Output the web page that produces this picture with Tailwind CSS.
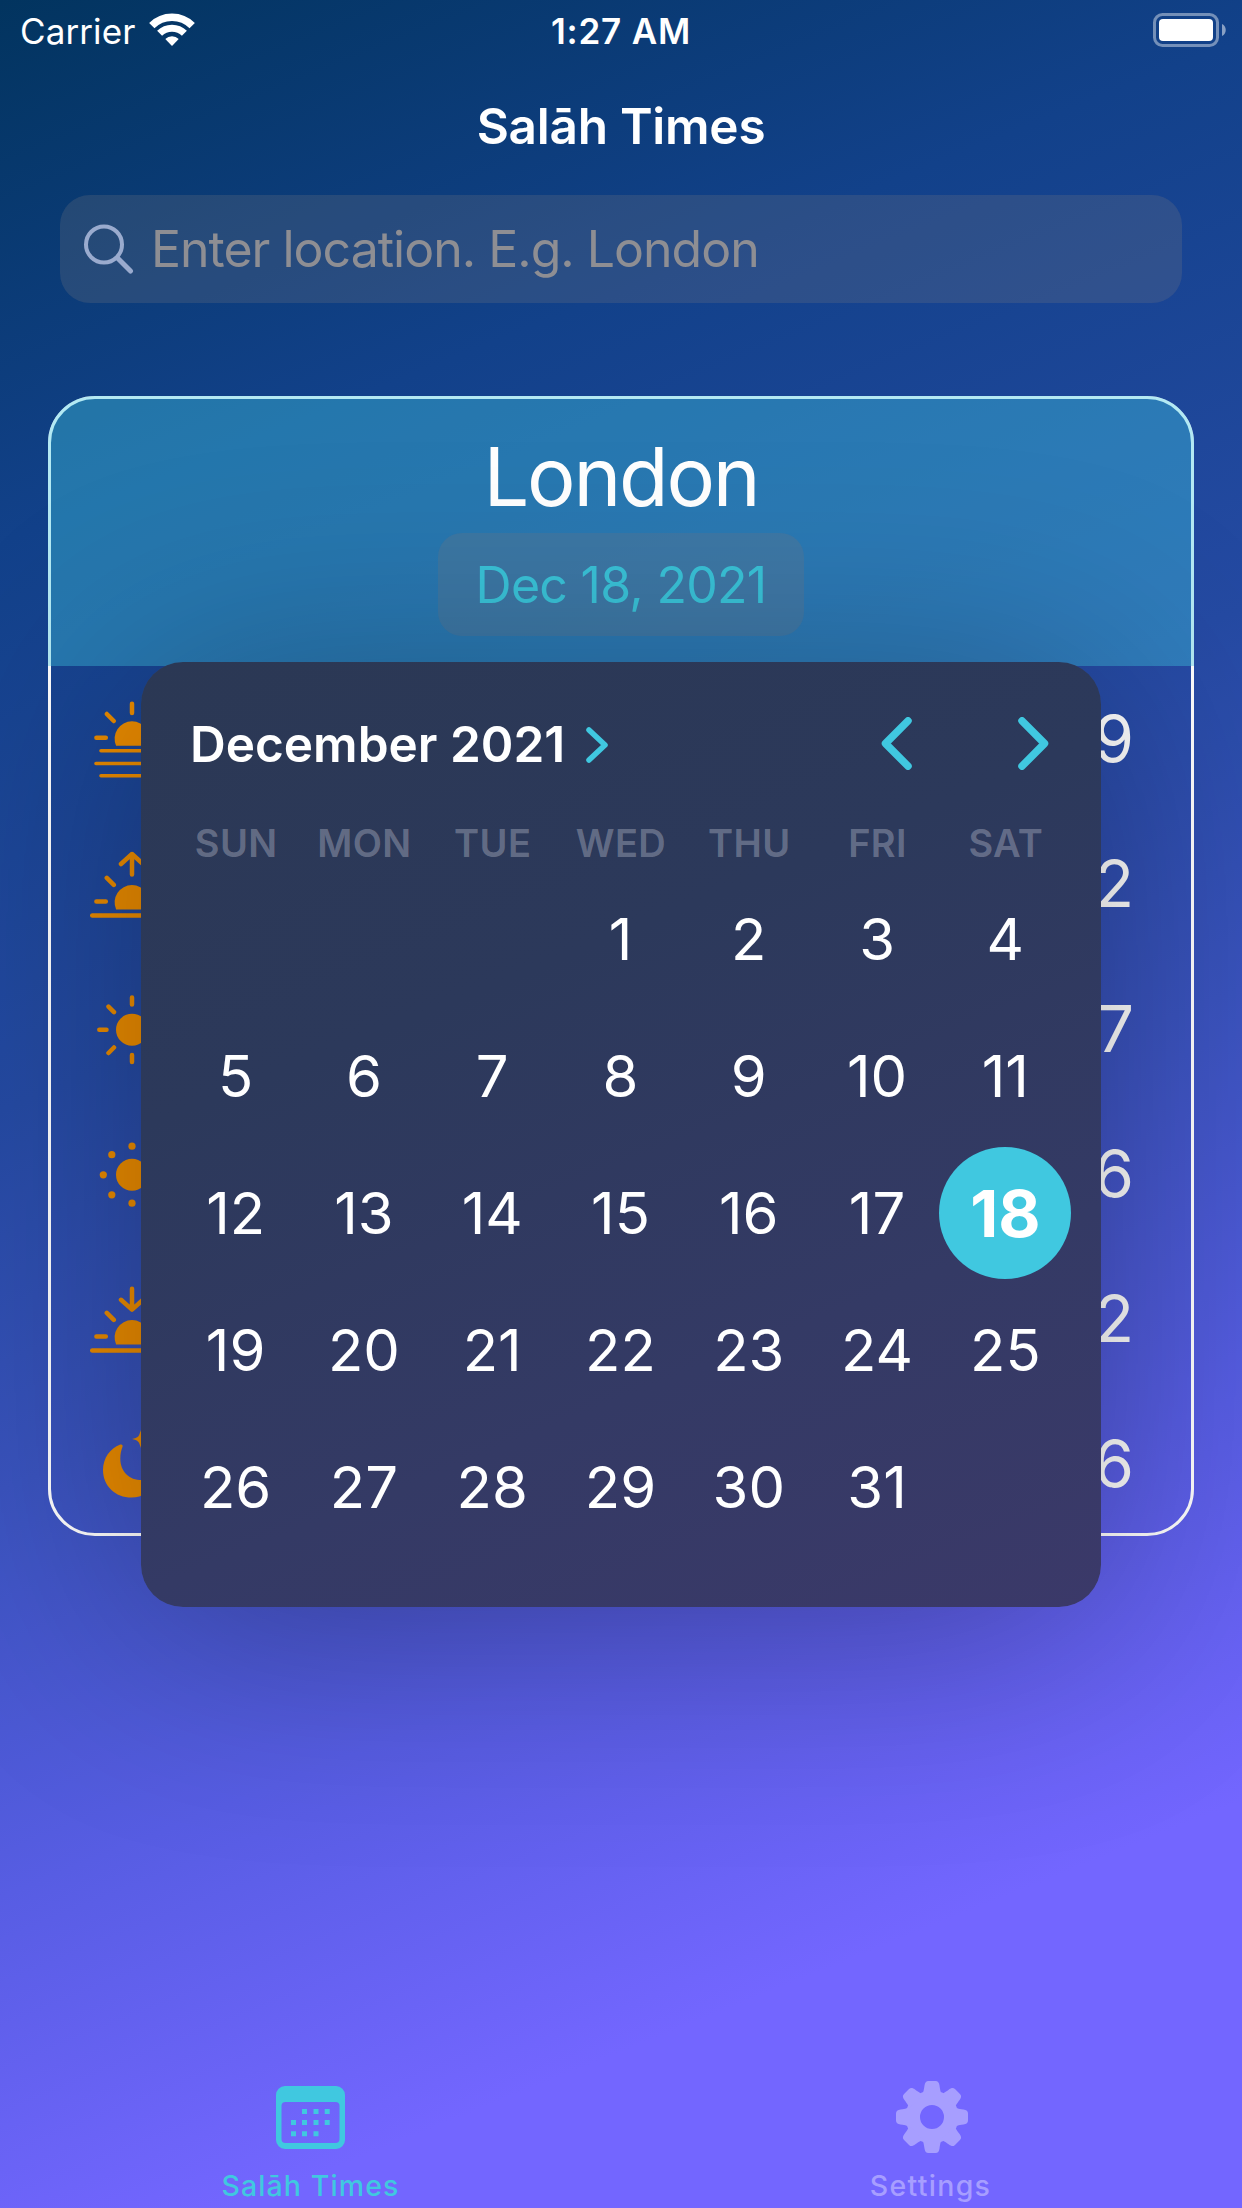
<!DOCTYPE html>
<html lang="en">
<head>
<meta charset="utf-8">
<title>Salāh Times</title>
<script src="https://cdn.jsdelivr.net/npm/@tailwindcss/browser@4"></script>
</head>
<body class="font-[Inter,sans-serif]">
<div class="relative flex h-[2208px] w-[1242px] flex-col overflow-hidden bg-[linear-gradient(158deg,#02345f_0%,#12418a_20%,#254aa3_41%,#3a53be_55%,#575de3_70%,#7366ff_85%)] text-white">

  <!-- Status bar -->
  <header class="grid h-[62px] grid-cols-3 items-center px-5">
    <div class="flex items-center gap-[14px]">
      <span class="text-[35px] leading-none tracking-[0.1px]">Carrier</span>
      <svg class="-mt-1 h-[33px] w-[46px]" viewBox="0 0 46 33" fill="none" stroke="#fff">
        <path d="M2.8 12.6a28.5 28.5 0 0 1 40.4 0" stroke-width="7.5"/>
        <path d="M10.6 20.3a17.5 17.5 0 0 1 24.8 0" stroke-width="7"/>
        <path d="M16.3 26a9.5 9.5 0 0 1 13.4 0L23 33z" fill="#fff" stroke="none"/>
      </svg>
    </div>
    <div class="text-center text-[35px] font-semibold leading-none tracking-[0.8px]">1:27 AM</div>
    <svg class="-mr-1 -mt-0.5 h-[34px] w-[73px] justify-self-end" viewBox="0 0 73 34">
      <rect x="1.5" y="1.5" width="63" height="31" rx="8" fill="none" stroke="#fff" stroke-opacity=".42" stroke-width="3"/>
      <rect x="6" y="6" width="54" height="22" rx="4" fill="#fff"/>
      <path d="M69 11c5 2 5 10 0 12z" fill="#fff" fill-opacity=".5"/>
    </svg>
  </header>

  <h1 class="flex h-[129px] items-center justify-center text-[49.5px] font-semibold leading-none tracking-[-0.25px]">Salāh Times</h1>

  <!-- Search field -->
  <div class="mx-[60px] mt-1 flex h-[108px] items-center rounded-[30px] bg-[#767680]/25 pl-6">
    <svg class="h-[50px] w-[50px]" viewBox="0 0 50 50" fill="none" stroke="#9aabce" stroke-linecap="round">
      <circle cx="20" cy="20.5" r="18" stroke-width="4"/>
      <path d="M33.5 34L46.5 47" stroke-width="5"/>
    </svg>
    <span class="ml-[17px] text-[50px] leading-none tracking-[-1px] text-[#8e8e93]">Enter location. E.g. London</span>
  </div>

  <!-- Prayer times card -->
  <main class="mx-12 mt-[93px] flex h-[1140px] flex-col rounded-[47px] border-[3px] border-white">
    <div class="-mx-[3px] -mt-[3px] flex h-[270px] shrink-0 flex-col items-center rounded-t-[47px] bg-[#40c8e0]/40 pt-[31px]">
      <h2 class="text-[81px] leading-[100px] tracking-[-2.2px]">London</h2>
      <div class="mt-1.5 flex h-[103px] w-[366px] items-center justify-center rounded-3xl bg-[#767680]/25 text-[50px] leading-none tracking-[-0.7px] text-[#3ac4da]">Dec 18, 2021</div>
    </div>
    <ul class="-mb-[3px] flex flex-col text-[64px] leading-none">
      <li class="flex h-[145px] items-center justify-between pl-[39px] pr-[57px]">
        <svg class="size-[84px]" viewBox="0 0 84 84" fill="none" stroke="#ea8b00" stroke-width="4.5" stroke-linecap="round">
          <path d="M42 6.8V16M16.8 17l7 7M67.2 17l-7 7M6.4 40.8h9.4M77.6 40.8h-9.4"/>
          <path d="M26.1 48.8a17.4 17.4 0 1 1 31.8 0z" fill="#ea8b00" stroke="none"/>
          <path d="M11 53.8h62M6 66.5h72M11 78.8h62" stroke-width="3.6"/>
        </svg><span>9</span>
      </li>
      <li class="flex h-[145px] items-center justify-between pl-[39px] pr-[57px]">
        <svg class="size-[84px]" viewBox="0 0 84 84" fill="none" stroke="#ea8b00" stroke-width="4.5" stroke-linecap="round" stroke-linejoin="round">
          <path d="M42 12v20.6M31 22l11-10 11 10M16.8 35.9l7 7M67.2 35.9l-7 7M6.4 59.5h9.4M77.6 59.5h-9.4M2.2 73.5h79.6"/>
          <path d="M26.1 67.5a17.4 17.4 0 1 1 31.8 0z" fill="#ea8b00" stroke="none"/>
        </svg><span>2</span>
      </li>
      <li class="flex h-[145px] items-center justify-between pl-[39px] pr-[57px]">
        <svg class="size-[84px]" viewBox="0 0 84 84" fill="none" stroke="#ea8b00" stroke-width="4.5" stroke-linecap="round">
          <circle cx="42" cy="42.8" r="16" fill="#ea8b00" stroke="none"/>
          <path d="M42 10.6v7M42 67.9v7M9.3 42.8h7.2M74.7 42.8h-7.2M18.5 19.6l5.5 5.5M65.5 19.6l-5.5 5.5M18.5 66l5.5-5.5M65.5 66l-5.5-5.5"/>
        </svg><span>7</span>
      </li>
      <li class="flex h-[145px] items-center justify-between pl-[39px] pr-[57px]">
        <svg class="size-[84px]" viewBox="0 0 84 84" fill="#ea8b00">
          <circle cx="42" cy="42.8" r="16"/>
          <circle cx="42" cy="14.2" r="3.6"/><circle cx="42" cy="71.2" r="3.6"/>
          <circle cx="13.3" cy="42.8" r="3.6"/><circle cx="70.7" cy="42.8" r="3.6"/>
          <circle cx="21.8" cy="22.7" r="3.6"/><circle cx="62.2" cy="22.7" r="3.6"/>
          <circle cx="21.8" cy="62.8" r="3.6"/><circle cx="62.2" cy="62.8" r="3.6"/>
        </svg><span>6</span>
      </li>
      <li class="flex h-[145px] items-center justify-between pl-[39px] pr-[57px]">
        <svg class="size-[84px]" viewBox="0 0 84 84" fill="none" stroke="#ea8b00" stroke-width="4.5" stroke-linecap="round" stroke-linejoin="round">
          <path d="M42 11.7v20.6M31 22.8l11 9.8 11-9.8M16.8 35.9l7 7M67.2 35.9l-7 7M6.4 59.5h9.4M77.6 59.5h-9.4M2.2 73.5h79.6"/>
          <path d="M26.1 67.5a17.4 17.4 0 1 1 31.8 0z" fill="#ea8b00" stroke="none"/>
        </svg><span>2</span>
      </li>
      <li class="flex h-[145px] items-center justify-between pl-[39px] pr-[57px]">
        <svg class="size-[84px]" viewBox="0 0 84 84" fill="#ea8b00">
          <path d="M30.2 22.6c1.7-.7 2.9.6 2.3 2.200C31.200 28.500 30.300 32 30.300 36.400 30.300 49.500 39 58.100 52 58.100c4.500 0 8-1 11.300-2.200 1.700-.6 3 .6 2.300 2.300C61.400 69 52.500 75.600 41.500 75.600 25.300 75.600 13 64 13 48 13 36.500 20 26.500 30.200 22.600z"/>
          <path d="M50.500 8c.8 6 2.500 8 8.500 9-6 1-7.700 3-8.500 9-.8-6-2.500-8-8.500-9 6-1 7.700-3 8.500-9z"/>
        </svg><span>6</span>
      </li>
    </ul>
  </main>

  <!-- Tab bar -->
  <nav class="mt-auto grid h-[122px] grid-cols-2 text-[28.5px] font-medium leading-[30px]">
    <div class="flex flex-col items-center text-[#40c8e0]">
      <svg class="h-[63px] w-[69px]" viewBox="0 0 69 63" fill="currentColor">
        <path fill-rule="evenodd" d="M9 0h51a9 9 0 0 1 9 9v45a9 9 0 0 1-9 9H9a9 9 0 0 1-9-9V9a9 9 0 0 1 9-9zM9.500 16a4 4 0 0 0-4 4v33a4 4 0 0 0 4 4h50a4 4 0 0 0 4-4V20a4 4 0 0 0-4-4z"/>
        <path d="M26 23h5v5h-5zM37.500 23h5v5h-5zM48.700 23h5v5h-5zM15 34h5v5h-5zM26 34h5v5h-5zM37.500 34h5v5h-5zM48.700 34h5v5h-5zM15 45.200h5v5h-5zM26 45.200h5v5h-5zM37.500 45.200h5v5h-5z"/>
      </svg>
      <span class="mt-[21.5px] tracking-[1.1px]">Salāh Times</span>
    </div>
    <div class="flex flex-col items-center text-[#a79eff]">
      <svg class="-mt-[5px] size-[72px]" viewBox="-36 -36 72 72" fill="currentColor">
        <defs><path id="tooth" d="M-10.500-22C-8.800-24-8.300-26-7.500-31.500-7-34.500-6-36-3.500-36h7C6-36 7-34.500 7.500-31.500 8.300-26 8.800-24 10.500-22z"/></defs>
        <path fill-rule="evenodd" d="M0-26.500a26.500 26.500 0 1 0 0 53 26.500 26.500 0 1 0 0-53zM0-12a12 12 0 1 1 0 24 12 12 0 1 1 0-24z"/>
        <use href="#tooth"/><use href="#tooth" transform="rotate(45)"/><use href="#tooth" transform="rotate(90)"/><use href="#tooth" transform="rotate(135)"/>
        <use href="#tooth" transform="rotate(180)"/><use href="#tooth" transform="rotate(225)"/><use href="#tooth" transform="rotate(270)"/><use href="#tooth" transform="rotate(315)"/>
      </svg>
      <span class="mr-[2px] mt-[17.5px] tracking-[1.3px]">Settings</span>
    </div>
  </nav>

  <!-- Date picker popover -->
  <section class="absolute left-[141px] top-[662px] flex h-[945px] w-[960px] flex-col rounded-[42px] bg-[linear-gradient(158deg,#2b3854_0%,#2c395b_35%,#343a65_70%,#3b3969_100%)] pt-[33px] shadow-[0_20px_230px_rgba(0,0,0,0.3)]">
    <div class="flex h-[100px] items-center pl-[49px] pr-[52px]">
      <span class="text-[49.5px] font-semibold leading-none">December 2021</span>
      <svg class="ml-[21px] h-[36px] w-[22px]" viewBox="0 0 22 36" fill="none" stroke="#40c8e0" stroke-width="5.5" stroke-linecap="round" stroke-linejoin="round"><path d="M3 3l16 15L3 33"/></svg>
      <div class="-mt-[3px] ml-auto flex gap-[106px]">
        <svg class="h-[53px] w-[31px]" viewBox="0 0 31 53" fill="none" stroke="#40c8e0" stroke-width="7.5" stroke-linecap="round" stroke-linejoin="round"><path d="M27 3.800L4.500 26.500 27 49.200"/></svg>
        <svg class="h-[53px] w-[31px]" viewBox="0 0 31 53" fill="none" stroke="#40c8e0" stroke-width="7.5" stroke-linecap="round" stroke-linejoin="round"><path d="M4 3.800L26.500 26.500 4 49.200"/></svg>
      </div>
    </div>
    <div class="mx-[31px] mt-7 grid h-10 grid-cols-7 items-center text-center text-[38px] font-semibold leading-none tracking-[0.4px] text-[#ebebf5]/30">
      <span>SUN</span><span>MON</span><span>TUE</span><span>WED</span><span>THU</span><span>FRI</span><span>SAT</span>
    </div>
    <div class="ml-[30.5px] mr-[31.5px] mt-[7.5px] grid auto-rows-[137px] grid-cols-7 place-items-center text-[58px] leading-none">
      <span class="col-start-4">1</span><span>2</span><span>3</span><span>4</span>
      <span>5</span><span>6</span><span>7</span><span>8</span><span>9</span><span>10</span><span>11</span>
      <span>12</span><span>13</span><span>14</span><span>15</span><span>16</span><span>17</span>
      <span class="-mx-1 flex size-[132px] items-center justify-center rounded-full bg-[#40c8e0] text-[65px] font-bold">18</span>
      <span>19</span><span>20</span><span>21</span><span>22</span><span>23</span><span>24</span><span>25</span>
      <span>26</span><span>27</span><span>28</span><span>29</span><span>30</span><span>31</span>
    </div>
  </section>
</div>
</body>
</html>
